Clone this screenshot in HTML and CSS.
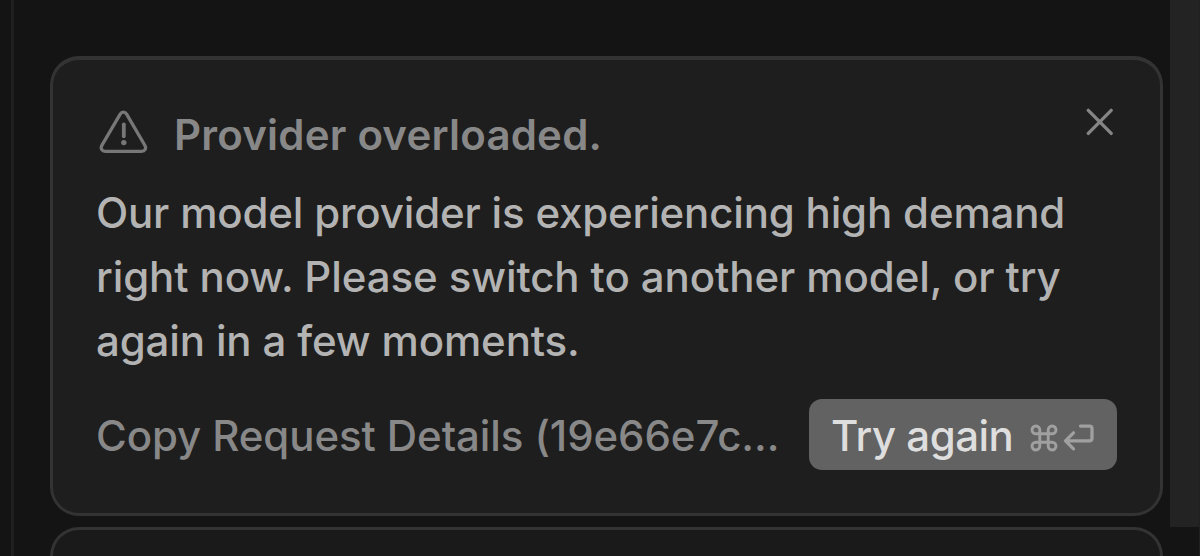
FILE: index.html
```html
<!DOCTYPE html>
<html lang="en">
<head>
  <meta charset="UTF-8">
  <meta name="viewport" content="width=device-width, initial-scale=1.0">
  <title>Chat</title>
  <link rel="stylesheet" href="styles.css">
</head>
<body>
  <div class="panel">
    <div class="content">
      <div class="error-card">
        <div class="card-header">
          <svg class="warning-icon" width="50" height="46" viewBox="0 0 50 46" fill="none">
            <path d="M21.2 5.1 L3 36.2 C1.1 39.5 3 42.3 6.2 42.3 H42.6 C45.8 42.3 47.7 39.5 45.8 36.2 L27.6 5.1 C26 2.4 22.8 2.4 21.2 5.1 Z" stroke="currentColor" stroke-width="3.3" stroke-linejoin="round"/>
            <path d="M24.8 15.3 V27.3" stroke="currentColor" stroke-width="3.8" stroke-linecap="round"/>
            <circle cx="24.8" cy="33.6" r="2.7" fill="currentColor"/>
          </svg>
          <h2>Provider overloaded.</h2>
          <button class="close-button" aria-label="Close">
            <svg width="28" height="28" viewBox="0 0 28 28" fill="none">
              <path d="M2.3 2.3 L25.2 25.4 M25.2 2.3 L2.3 25.4" stroke="currentColor" stroke-width="3.3" stroke-linecap="round"/>
            </svg>
          </button>
        </div>

        <p class="message">
          <span class="line line-first">Our model provider is experiencing high demand</span>
          <span class="line line-second">right now. Please switch to another model, or try</span>
          <span class="line line-third">again in a few moments.</span>
        </p>

        <div class="card-footer">
          <span class="copy-details">Copy Request Details (19e66e7c...</span>
          <button class="retry-button">
            <span class="retry-label">Try again</span>
            <svg width="64" height="28" viewBox="0 0 64 28" fill="none" stroke="currentColor" stroke-width="2.9">
              <path d="M9.8 9.8 H18.2 V18.2 H9.8 Z"/>
              <path d="M9.8 9.8 H6 A3.9 3.9 0 1 1 9.8 6 Z M18.2 9.8 V6 A3.9 3.9 0 1 1 22 9.8 Z M18.2 18.2 H22 A3.9 3.9 0 1 1 18.2 22 Z M9.8 18.2 V22 A3.9 3.9 0 1 1 6 18.2 Z"/>
              <path d="M50.5 2.1 H59.5 Q62 2.1 62 4.6 V14.3 Q62 16.8 59.5 16.8 H36 M43.5 8.8 L35.5 16.8 L43.5 24.8" stroke-width="3.3" stroke-linecap="round" stroke-linejoin="round"/>
            </svg>
          </button>
        </div>
      </div>

      <div class="input-card"></div>
    </div>
    <div class="scrollbar"></div>
  </div>
</body>
</html>
```
FILE: styles.css
```css
* {
  margin: 0;
  padding: 0;
  box-sizing: border-box;
  font-family: Inter, sans-serif;
}

body {
  height: 556px;
  overflow: hidden;
  background-color: #141414;
}

.panel {
  display: flex;
  justify-content: space-between;
  height: 556px;
  margin-left: 11px;
  border-left: 3px solid #202020;
  border-right: 1px solid #202020;
}

.content {
  display: flex;
  flex-direction: column;
  width: 1113px;
  margin-left: 36px;
  padding-top: 56px;
}

.error-card {
  height: 460px;
  padding: 44px 43px 42px 43px;
  border: 3px solid #333;
  border-top-width: 4px;
  border-radius: 29px;
  background-color: #1e1e1e;
}

.card-header {
  display: flex;
  align-items: flex-start;
  height: 77px;
  color: #888;
}

.warning-icon {
  margin-top: 5px;
  margin-left: 3px;
  color: #777;
}

.card-header h2 {
  margin-left: 25px;
  font-size: 42px;
  font-weight: 600;
  letter-spacing: 0.2px;
  line-height: 62px;
  white-space: nowrap;
}

.close-button {
  margin-top: 4px;
  margin-left: auto;
  margin-right: 3px;
  border: none;
  background: none;
  color: #858585;
}

.close-button svg {
  display: block;
}

.message {
  color: #b3b3b3;
  font-size: 42px;
  font-weight: 500;
  line-height: 64px;
}

.line {
  display: block;
  white-space: nowrap;
}

.line-first {
  letter-spacing: -0.17px;
}

.line-second {
  letter-spacing: -0.09px;
}

.line-third {
  letter-spacing: -0.14px;
}

.card-footer {
  display: flex;
  align-items: center;
  justify-content: space-between;
  height: 71px;
  margin-top: 26px;
}

.copy-details {
  padding-top: 2px;
  color: #888;
  font-size: 42px;
  font-weight: 500;
  letter-spacing: -0.09px;
  white-space: nowrap;
}

.retry-button {
  display: flex;
  align-items: center;
  justify-content: space-between;
  width: 308px;
  height: 71px;
  padding: 0 23px 0 22px;
  border: none;
  border-radius: 13px;
  background-color: #626262;
  color: #a0a0a0;
}

.retry-button svg {
  margin-top: 6px;
}

.retry-label {
  padding-top: 2px;
  color: #dedede;
  font-size: 42px;
  font-weight: 500;
  letter-spacing: -0.5px;
  white-space: nowrap;
}

.input-card {
  flex: 1;
  margin-top: 11px;
  border: 3px solid #333;
  border-bottom: none;
  border-radius: 29px 29px 0 0;
  background-color: #1a1a1a;
}

.scrollbar {
  width: 29px;
  height: 527px;
  background-color: #232323;
}
```
